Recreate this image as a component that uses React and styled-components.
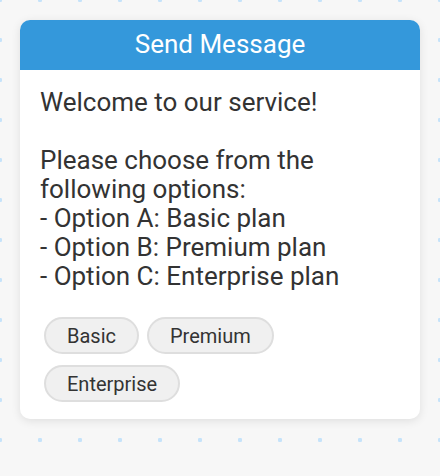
import React from "react";
import styled, { createGlobalStyle } from "styled-components";

const GlobalStyle = createGlobalStyle`
  html, body {
    margin: 0;
    padding: 0;
  }
  body {
    min-height: 476px;
    font-family: Roboto, "Liberation Sans", sans-serif;
    background-color: #f7f7f7;
    background-image: radial-gradient(circle, #c6e3fa 2px, transparent 2.4px);
    background-size: 40px 40px;
    background-position: -20px -20px;
  }
`;

const Page = styled.div`
  padding: 20px;
`;

const Card = styled.div`
  width: 400px;
  background: #fff;
  border-radius: 10px;
  box-shadow: 0 2px 10px rgba(0, 0, 0, 0.1);
  overflow: hidden;
`;

const Header = styled.div`
  height: 50px;
  padding-bottom: 3px;
  box-sizing: border-box;
  background: #3498db;
  color: #fff;
  font-size: 26px;
  display: flex;
  align-items: center;
  justify-content: center;
`;

const Body = styled.div`
  padding: 18px 20px 17px;
`;

const Message = styled.div`
  white-space: pre-wrap;
  color: #333;
  font-size: 26px;
  line-height: 29px;
`;

const Choices = styled.div`
  display: flex;
  flex-wrap: wrap;
  gap: 11px 8px;
  margin: 26px 4px 0;
`;

const Choice = styled.button`
  height: 37px;
  padding: 0 21px;
  border: 2px solid #dedede;
  border-radius: 999px;
  background: #f0f0f0;
  color: #333;
  font-family: inherit;
  font-size: 20px;
  cursor: pointer;
`;

const text =
  "Welcome to our service!\n\nPlease choose from the following options:\n- Option A: Basic plan\n- Option B: Premium plan\n- Option C: Enterprise plan";

const options = ["Basic", "Premium", "Enterprise"];

export default function App() {
  return (
    <>
      <GlobalStyle />
      <Page>
        <Card>
          <Header>Send Message</Header>
          <Body>
            <Message>{text}</Message>
            <Choices>
              {options.map((o) => (
                <Choice key={o}>{o}</Choice>
              ))}
            </Choices>
          </Body>
        </Card>
      </Page>
    </>
  );
}
